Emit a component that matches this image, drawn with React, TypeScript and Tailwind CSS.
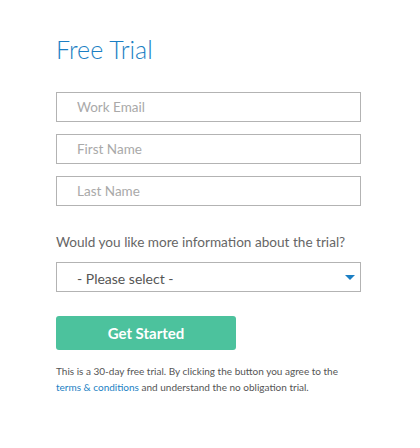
import React from "react";

const Field = ({ placeholder }: { placeholder: string }) => (
    <input
        type="text"
        placeholder={placeholder}
        className="block h-[30px] w-[305px] border border-[#b3b3b3] bg-white pl-[20px] text-[13.5px] text-[#555] outline-none placeholder:text-[#a9a9a9]"
    />
);

export default function App() {
    return (
        <div className="min-h-[448px] w-[420px] bg-white font-['Lato','Open_Sans',sans-serif]">
            <div className="flex flex-col px-[56px] pt-[34px]">
                <h1 className="text-[25px] font-light leading-[30px] text-[#1b7fc4]">
                    Free Trial
                </h1>
                <div className="mt-[28px] flex flex-col gap-[12px]">
                    <Field placeholder="Work Email" />
                    <Field placeholder="First Name" />
                    <Field placeholder="Last Name" />
                </div>
                <p className="mt-[26px] text-[13.6px] leading-[20px] text-[#666]">
                    Would you like more information about the trial?
                </p>
                <div className="relative mt-[10px] h-[30px] w-[305px] border border-[#b3b3b3] bg-white">
                    <span className="absolute left-[20px] top-[5px] text-[14px] text-[#555]">
                        - Please select -
                    </span>
                    <svg
                        className="absolute right-[5px] top-[12px]"
                        width="10"
                        height="6"
                        viewBox="0 0 10 6"
                    >
                        <path d="M0 0h10L5 5z" fill="#1b7fc4" />
                    </svg>
                </div>
                <button className="mt-[24px] h-[34px] w-[180px] rounded-[3px] bg-[#4cc29d] text-[15px] font-bold text-white">
                    Get Started
                </button>
                <p className="mt-[13px] w-[295px] text-[10px] leading-[16px] text-[#555]">
                    This is a 30-day free trial. By clicking the button you agree to the{" "}
                    <span className="text-[#1b7fc4]">terms &amp; conditions</span> and
                    understand the no obligation trial.
                </p>
            </div>
        </div>
    );
}
